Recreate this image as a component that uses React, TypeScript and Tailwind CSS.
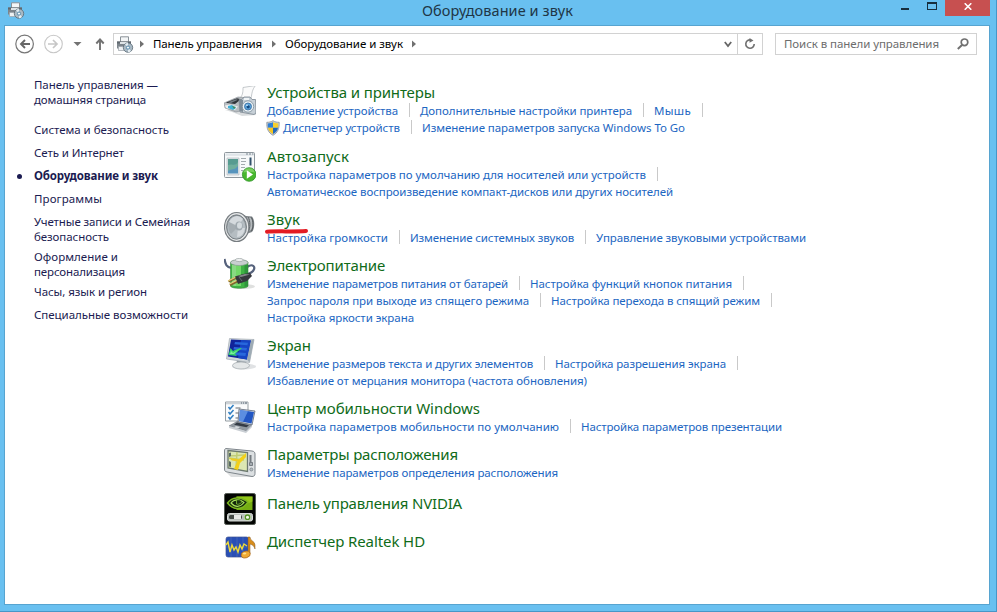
import { useLayoutEffect, useRef, useState } from "react";
import type { ReactNode } from "react";

type FitProps = { text: string; width: number; className?: string };

// Spreads a single line of text over an exact width by adjusting its tracking.
function Fit({ text, width, className = "" }: FitProps) {
  const ref = useRef<HTMLSpanElement>(null);
  const [spacing, setSpacing] = useState(0);
  useLayoutEffect(() => {
    if (ref.current) {
      ref.current.style.letterSpacing = "0px";
      const natural = ref.current.getBoundingClientRect().width;
      const next = (width - natural) / text.length;
      ref.current.style.letterSpacing = `${next}px`;
      setSpacing(next);
    }
  }, [text, width]);
  return (
    <span className={`block shrink-0 whitespace-nowrap ${className}`} style={{ width }}>
      <span ref={ref} style={{ letterSpacing: spacing }}>{text}</span>
    </span>
  );
}

function PrinterSmall() {
  return (
    <svg viewBox="0 0 18 17" className="h-[17px] w-[18px] shrink-0">
      <path d="M4.5 6V.8h8V6" fill="#f4f6f7" stroke="#8a9298" strokeWidth="1" />
      <path d="M1 5.500h14v7H1z" fill="#7c848b" />
      <path d="M1 5.500h14v2H1z" fill="#60686f" />
      <path d="M4 6h8v2H4z" fill="#dfe4e7" />
      <path d="M2.500 10.500h6v4h-6z" fill="#eef1f3" stroke="#9aa1a7" strokeWidth=".7" />
      <circle cx="12" cy="11.600" r="4.700" fill="#a9b9c4" stroke="#596873" strokeWidth=".8" />
      <path d="M12 11.600 9 8.200a4.600 4.600 0 0 1 3-1.200zM12 11.600l3 3.400a4.600 4.600 0 0 1-3 1.200z" fill="#e4edf2" />
      <circle cx="12" cy="11.600" r="1.600" fill="#f4f8fa" stroke="#4b82a6" strokeWidth=".9" />
    </svg>
  );
}

function Shield() {
  return (
    <svg viewBox="0 0 14 16" className="h-4 w-3.5 shrink-0">
      <path d="M7 .7C5 2 3 2.300.8 2.300c-.2 6 1.200 10.400 6.200 13 5-2.600 6.400-7 6.200-13C11 2.300 9 2 7 .7z" fill="#c9ced2" stroke="#8b9298" strokeWidth=".8" />
      <path d="M7 2.200v5.600H2c-.2-1.400-.2-2.800-.2-4.400C3.800 3.300 5.500 3 7 2.200z" fill="#2f7fd6" />
      <path d="M7 2.200c1.500.8 3.200 1.100 5.200 1.200 0 1.600 0 3-.2 4.400H7z" fill="#f8cf2c" />
      <path d="M2 7.800h5v6.300c-3-1.600-4.500-3.600-5-6.300z" fill="#f6c722" />
      <path d="M7 7.800h5c-.5 2.700-2 4.700-5 6.300z" fill="#2269bd" />
    </svg>
  );
}

function Devices() {
  return (
    <>
      <path d="M1 24 8 26l10 4 14-1 0-4z" fill="#d9dcde" />
      <path d="m19 1.500 12.500-2C28 4 28 7 27 13l-11-1c3-3 3-7 3-10.500z" fill="#fbfbfb" stroke="#adb3b8" strokeWidth=".7" />
      <path d="m0 17 14-6 6 .5L16 25l-4 1-11-4z" fill="#b9bec2" stroke="#858c92" strokeWidth=".6" />
      <path d="m2 16.500 11-4.300 4 1-6 4.800-8-1z" fill="#303539" />
      <path d="m4 16.300 8-3 2 .5-7 3.200z" fill="#737d84" />
      <path d="m1 19.500 5-1 8 2-3 3.500-9-2z" fill="#eceff1" />
      <path d="m4 20 4-1 4 3-3 2-5-2z" fill="#3fb2d7" />
      <path d="m8 20 4 1-2 2z" fill="#438e60" />
      <path d="M15 13.500h3l2-2.500h6l2 2.500h3.500L32 27l-2 1.500L16 26z" fill="#c7d0d7" stroke="#7b8790" strokeWidth=".8" />
      <path d="M15 14h4v12l-3-.7z" fill="#7e8c98" />
      <path d="M20 12h5v2h-5z" fill="#eff3f5" />
      <circle cx="24" cy="20.500" r="5.700" fill="#eaf0f4" stroke="#7a8b98" strokeWidth=".8" />
      <circle cx="24" cy="20.500" r="3.500" fill="#5ca4dc" stroke="#32699d" strokeWidth=".8" />
      <circle cx="24.200" cy="20.800" r="1.600" fill="#164b82" />
      <circle cx="23" cy="19.300" r=".8" fill="#e4f6ff" />
    </>
  );
}

function AutoPlay() {
  return (
    <>
      <rect x=".5" y=".5" width="30" height="25" rx="1" fill="#f7f9fa" stroke="#8e979d" />
      <path d="M1.500 1.500h28v2.300h-28z" fill="#dfe4e8" />
      <path d="M22 2h2m1 0h2m1 0h1.500" stroke="#7a8791" />
      <path d="M3 6h12v17H3z" fill="#e4e9ec" stroke="#acb4ba" strokeWidth=".6" />
      <path d="M4 7h10v14.500H4z" fill="#5794bd" />
      <path d="M4 7h10v5c-5 0-7 3-10 6z" fill="#569b90" />
      <path d="M4 13c5-2 7 2 10-3v4c-4 5-6 2-10 5z" fill="#6fae9c" />
      <path d="M17 6.500h5m-5 3h5m-5 3h4m-4 3h4m-4 3h2" stroke="#8c959b" strokeWidth=".8" />
      <path d="M26.500 5.500v8" stroke="#31506b" strokeWidth="2" />
      <circle cx="25.200" cy="22.500" r="6.800" fill="#48b72e" stroke="#2b9323" strokeWidth=".8" />
      <path d="M19.400 20.500a6 6 0 0 1 11.500 0c-3-1-7-1-11.500 0z" fill="#a2e386" opacity=".55" />
      <path d="m22.800 18.200 6.200 4.300-6.200 4.200z" fill="#fff" />
    </>
  );
}

function Speaker() {
  return (
    <>
      <path d="m15 2 7 3 6 .5c3 3 3 12 0 15.500l-6 2-7 6z" fill="#7d8387" />
      <path d="m23 6 4 1c2 3 2 9 0 12l-4 2z" fill="#b4b9bc" />
      <path d="M24 6c2.500 4 2.500 11 0 15M27.500 6.500c2 4 2 10 0 13.500" fill="none" stroke="#555b5f" />
      <ellipse cx="12.700" cy="16" rx="12.200" ry="14.500" fill="#e4e6e7" stroke="#777d81" strokeWidth="1.200" />
      <ellipse cx="12.500" cy="16" rx="10" ry="12.200" fill="#929a9f" stroke="#6c7478" strokeWidth=".8" />
      <ellipse cx="12.500" cy="16.500" rx="9" ry="11" fill="#b5bdc2" />
      <path d="M5 11 14 15l5-7c-4-5-11-4-14 3zM14 17h7c-1 6-4 9-8 9z" fill="#d5dade" />
      <path d="m14 16-9-5c-1 5-1 9 2 12z" fill="#a5adb2" />
      <ellipse cx="15" cy="15" rx="3.700" ry="4.500" fill="#9fa8ae" />
      <ellipse cx="15.500" cy="14.500" rx="2.500" ry="3.300" fill="#d4dade" />
    </>
  );
}

function Power() {
  return (
    <>
      <ellipse cx="19" cy="28.500" rx="12" ry="2.500" fill="#dfe0df" />
      <path d="M.5 1c1 6 2 8 7 9M23 9c6-4 9 0 6 4s-7 1-8 6" fill="none" stroke="#56627c" strokeWidth="2.200" />
      <path d="M6.500 4.500c0-3 17.500-3 17.500 0V28c0 3-17.500 3-17.500 0z" fill="#3fb344" stroke="#35873a" strokeWidth=".6" />
      <path d="M8 7h4v21c-2 0-4-.5-4-1z" fill="#a3e598" opacity=".75" />
      <path d="M12 7h5v21h-5z" fill="#72d867" />
      <path d="M20.500 7H24v21l-3.500 1z" fill="#248337" opacity=".6" />
      <ellipse cx="15.250" cy="4.500" rx="8.700" ry="3" fill="#c8cfcf" stroke="#889292" strokeWidth=".6" />
      <ellipse cx="15.250" cy="2" rx="4" ry="1.600" fill="#eef0f0" stroke="#8c9595" strokeWidth=".6" />
      <path d="m4.500 23.500 8-4m-6.500 7.500 8-4" stroke="#80672d" strokeWidth="2.500" />
      <path d="m4 23 8-4m-6.500 7 8-4" stroke="#e7cc79" strokeWidth="1.300" />
      <path d="m11 18.500 8-2.500 7-1 2 3-5 5-9 3z" fill="#35373c" />
      <path d="m14 18 7-2 5 .5-9 2.500z" fill="#85878b" />
      <path d="m15 19 3 4" stroke="#666970" />
    </>
  );
}

function Display() {
  return (
    <>
      <ellipse cx="20" cy="28.500" rx="12" ry="3" fill="#e0e2e4" />
      <path d="m13 22 9 1 1 5H12z" fill="#8f989d" />
      <ellipse cx="17" cy="27.500" rx="8.500" ry="3.500" fill="#e4e7e8" stroke="#a2a9ad" strokeWidth=".7" />
      <path d="m5.500.5 24.500 1-4.500 23L2.500 21z" fill="#d1d7dc" stroke="#a4acb3" strokeWidth=".7" />
      <path d="m7 1.500 20 1-4 19L4 18.500z" fill="#10249a" />
      <path d="m17 2 10 .5-4 19-9-1.500z" fill="#1544c3" />
      <path d="m11 4 13 .7-.6 2.500-13-.9zM10 9l13 1-.6 2.500-13-1zM9 14l13 1-.6 3-13-1z" fill="#2868dc" />
      <path d="m27 2.500 3-1-4.500 23-2.500-3z" fill="#9eabb4" />
      <path d="m4.500 17 2-7 2.500 3c2-1 6-3 9-3-2 2-5 4-7 6l2 2z" fill="#39cf6d" />
      <path d="m6 16 1-3 2 2 5-3-4 4z" fill="#7af09b" />
    </>
  );
}

function Mobility() {
  return (
    <>
      <path d="M1.500 1h22.500v19H1.500z" fill="#fafbfc" stroke="#969ea4" />
      <path d="M2 1.500h21.500v1.800H2z" fill="#ccd2d7" />
      <path d="M17 2h1m1 0h1m1 0h2" stroke="#586675" />
      <path d="m4.500 6 1.500 2 3.500-4m-5 7 1.500 2 3.500-4m-5 7 1.500 2 3.500-4" fill="none" stroke="#307fc3" strokeWidth="1.500" />
      <path d="M11.500 7h5m-5 5h4m-4 5h3" stroke="#666d72" strokeWidth="1.200" />
      <path d="m15 8 16 2-3 14-14-3z" fill="#d2d9e0" stroke="#5a667a" strokeWidth=".8" />
      <path d="m16 9 14 2-2.500 11.500L15 20z" fill="#2256c3" />
      <path d="m16 9 8 1.200-5 10.600-4-.8z" fill="#6b9ce8" opacity=".8" />
      <path d="m13 20.500 15 3.500-6 6-17-5z" fill="#9098a0" stroke="#69717b" strokeWidth=".6" />
      <path d="m13 21.500 12 2.800-2.500 2-12.500-2.500z" fill="#343b45" />
      <path d="m5 25 17 5 6-6v2l-6 6-17-5z" fill="#c9ced3" />
      <path d="m12 25 4 1-2 1.500-4-1z" fill="#d4d9dd" />
    </>
  );
}

function Location() {
  return (
    <>
      <path d="M3 26h26v4H7z" fill="#dddfe0" />
      <path d="M2 1.500 28 4c2 .2 3 1.400 3 3v19.500c0 2-1 3-3 3L3 25c-2-.5-2.500-1-2.500-3V4c0-1.500.5-2.500 1.500-2.500z" fill="#dce0e2" stroke="#7e858b" />
      <path d="m4 3.500 19.500 2v19L4 21z" fill="#dce7b2" stroke="#6c796f" strokeWidth="1.300" />
      <path d="m5 9 15-1m-8 13 1-16m7 8-15-2" stroke="#bfcd75" strokeWidth="1.500" />
      <path d="m5 6 2-.5V9l-2 1zM5 14l2 1v5l-2-.5z" fill="#596b65" />
      <path d="m10 22 4-9 8-7v4l-6 6-2 7z" fill="#f2d019" />
      <path d="m5 11 9 1 2 3-8-1.500z" fill="#eecb22" />
      <path d="M26.500 8v7" stroke="#747b80" strokeWidth="2" />
      <path d="M25.500 15.500h3v3h-3z" fill="#a6adb2" stroke="#585f65" strokeWidth=".7" />
      <circle cx="27.300" cy="22.500" r="1.500" fill="#b7bec2" stroke="#6a7278" strokeWidth=".6" />
    </>
  );
}

function Nvidia() {
  return (
    <>
      <rect x=".5" y=".5" width="31" height="31" rx="1.800" fill="#030503" stroke="#555b54" />
      <path d="M12.500 3.500H28.500v13.500H12.500z" fill="#75ad12" />
      <path d="M12.500 3.500H28.500v5L12.500 15z" fill="#9ed01c" opacity=".75" />
      <path d="M3.500 10C8 4 16 3 24 9c-6 9-15 8-20.500 1z" fill="#13250b" stroke="#7bb720" strokeWidth="1.500" />
      <path d="M7 10c3-4 9-4 13-.5-4 5-9 5-13 .5z" fill="none" stroke="#a7df5d" strokeWidth="1.200" />
      <path d="M12.500 7c4-1 5 1 5 2.500-2 2-4 2-5 1.500z" fill="#1a340e" stroke="#85c73b" strokeWidth=".8" />
      <rect x="3.500" y="20.500" width="25" height="7.500" rx="2" fill="#bac0bc" stroke="#d9ddda" />
      <rect x="5" y="22" width="13" height="4" rx="1.500" fill="#444a46" />
      <path d="M10 22h7v4h-7z" fill="#e8eae8" />
      <circle cx="23.500" cy="24.200" r="3.300" fill="#d0ecb7" />
      <circle cx="23.500" cy="24.200" r="2.200" fill="#f4fced" stroke="#559029" strokeWidth="1.300" />
    </>
  );
}

function Realtek() {
  return (
    <>
      <rect x="2" y="1" width="22.500" height="20" rx="2" fill="#294fb5" stroke="#3c508f" strokeWidth=".7" />
      <path d="M2 11h22M7 1v20m6-20v20m6-20v20" stroke="#526ebb" strokeWidth=".6" />
      <path d="m2 9 2-3 2 10 2-7 2 5 2-3 2 5 2-7 2 4 2-5 3 2" fill="none" stroke="#efdb38" strokeWidth="1.400" />
      <path d="M24 1h2c0 4 5 4 5 8v4c-1-3-2-4-5-5v10h-2z" fill="#d88d1c" stroke="#875a21" strokeWidth=".5" />
      <ellipse cx="21.700" cy="18.500" rx="4.600" ry="3.300" transform="rotate(-15 21.700 18.500)" fill="#efa932" stroke="#ab671a" strokeWidth=".7" />
      <ellipse cx="20.500" cy="17.500" rx="1.800" ry="1" fill="#ffe087" />
    </>
  );
}

type LinkItem = { text: string; width: number; shield?: boolean; last?: boolean };
type Section = { title: string; width: number; icon: ReactNode; iconClass: string; gap: string; rows: LinkItem[][] };

const sections: Section[] = [
  { title: "Устройства и принтеры", width: 168, icon: <Devices />, iconClass: "mt-[3px]", gap: "mb-2.5", rows: [
    [{ text: "Добавление устройства", width: 131 }, { text: "Дополнительные настройки принтера", width: 212 }, { text: "Мышь", width: 37 }],
    [{ text: "Диспетчер устройств", width: 117, shield: true }, { text: "Изменение параметров запуска Windows To Go", width: 263, last: true }],
  ] },
  { title: "Автозапуск", width: 82, icon: <AutoPlay />, iconClass: "mt-[5px]", gap: "mb-[9px]", rows: [
    [{ text: "Настройка параметров по умолчанию для носителей или устройств", width: 379 }],
    [{ text: "Автоматическое воспроизведение компакт-дисков или других носителей", width: 406, last: true }],
  ] },
  { title: "Звук", width: 33, icon: <Speaker />, iconClass: "mt-px", gap: "mb-[9px]", rows: [
    [{ text: "Настройка громкости", width: 121 }, { text: "Изменение системных звуков", width: 164 }, { text: "Управление звуковыми устройствами", width: 210, last: true }],
  ] },
  { title: "Электропитание", width: 118, icon: <Power />, iconClass: "mt-0.5", gap: "mb-[9px]", rows: [
    [{ text: "Изменение параметров питания от батарей", width: 241 }, { text: "Настройка функций кнопок питания", width: 202 }],
    [{ text: "Запрос пароля при выходе из спящего режима", width: 262 }, { text: "Настройка перехода в спящий режим", width: 209 }],
    [{ text: "Настройка яркости экрана", width: 147, last: true }],
  ] },
  { title: "Экран", width: 44, icon: <Display />, iconClass: "mt-0.5", gap: "mb-[9px]", rows: [
    [{ text: "Изменение размеров текста и других элементов", width: 266 }, { text: "Настройка разрешения экрана", width: 171 }],
    [{ text: "Избавление от мерцания монитора (частота обновления)", width: 320, last: true }],
  ] },
  { title: "Центр мобильности Windows", width: 213, icon: <Mobility />, iconClass: "mt-0.5", gap: "mb-[9px]", rows: [
    [{ text: "Настройка параметров мобильности по умолчанию", width: 292 }, { text: "Настройка параметров презентации", width: 201, last: true }],
  ] },
  { title: "Параметры расположения", width: 191, icon: <Location />, iconClass: "mt-0.5", gap: "mb-3", rows: [
    [{ text: "Изменение параметров определения расположения", width: 291, last: true }],
  ] },
  { title: "Панель управления NVIDIA", width: 195, icon: <Nvidia />, iconClass: "-mt-px", gap: "mb-[18px]", rows: [] },
  { title: "Диспетчер Realtek HD", width: 158, icon: <Realtek />, iconClass: "mt-1", gap: "", rows: [] },
];

const nav = [
  { lines: [["Панель управления —", 124], ["домашняя страница", 112]], gap: "mb-[15px]" },
  { lines: [["Система и безопасность", 135]], gap: "mb-2" },
  { lines: [["Сеть и Интернет", 90]], gap: "mb-2" },
  { lines: [["Оборудование и звук", 124]], gap: "mb-2", active: true },
  { lines: [["Программы", 68]], gap: "mb-2" },
  { lines: [["Учетные записи и Семейная", 156], ["безопасность", 75]], gap: "mb-[5px]" },
  { lines: [["Оформление и", 84], ["персонализация", 91]], gap: "mb-[5px]" },
  { lines: [["Часы, язык и регион", 113]], gap: "mb-2" },
  { lines: [["Специальные возможности", 154]], gap: "" },
] as { lines: [string, number][]; gap: string; active?: boolean }[];

function Crumb() {
  return <svg viewBox="0 0 4 8" className="h-2 w-1 shrink-0"><path d="m0 .5 4 3.500-4 3.500z" fill="#707070" /></svg>;
}

function TitleBar() {
  return (
    <header className="flex h-[25px] shrink-0">
      <div className="w-[422px] pt-0.5 pl-[7px]"><PrinterSmall /></div>
      <Fit text="Оборудование и звук" width={151} className="text-[14.5px] leading-[21px] text-[#203646]" />
      <div className="flex flex-1 justify-end pr-[6px]">
        <div className="mt-2 mr-[18px] h-[2px] w-2 bg-[#172f3e]" />
        <div className="mt-0.5 mr-2 h-2 w-2.5 border border-t-2 border-[#172f3e]" />
        <div className="flex h-4 w-[45px] justify-center bg-[#c75050] pt-[3px]">
          <svg viewBox="0 0 8 7" className="h-[7px] w-2"><path d="m.7.3 6.600 6.400m0-6.400L.7 6.700" stroke="#fff" strokeWidth="1.600" /></svg>
        </div>
      </div>
    </header>
  );
}

function NavBar() {
  return (
    <div className="flex h-[35px] shrink-0 items-start pt-[7px] pl-2.5">
      <svg viewBox="0 0 92 22" className="h-[22px] w-[92px] shrink-0" fill="none">
        <circle cx="9.600" cy="11" r="8.800" stroke="#777" strokeWidth="1.200" />
        <path d="M15 11H6m4-4-4 4 4 4" stroke="#676767" strokeWidth="1.900" />
        <circle cx="38.500" cy="11" r="8.800" stroke="#c7c7c7" strokeWidth="1.100" />
        <path d="M33 11h9m-4-4 4 4-4 4" stroke="#c6c6c6" strokeWidth="1.700" />
        <path d="M58.500 9h8l-4 4z" fill="#737373" />
        <path d="M85 17V6.500m-3.700 4L85 6.500l3.700 4" stroke="#727272" strokeWidth="1.900" />
      </svg>
      <div className="ml-[6px] flex h-[22px] w-[650px] items-center border border-[#d2d2d2] text-[11.5px] text-black">
        <div className="ml-0.5"><PrinterSmall /></div>
        <div className="ml-[6px] flex items-center"><Crumb /><Fit text="Панель управления" width={109} className="ml-[9px]" /></div>
        <div className="ml-[10px] flex items-center"><Crumb /><Fit text="Оборудование и звук" width={118} className="ml-[9px]" /></div>
        <div className="ml-[9px] flex"><Crumb /></div>
        <svg viewBox="0 0 8 7" className="mr-[5px] ml-auto h-[7px] w-2" fill="none"><path d="m.8 1 3.200 4 3.200-4" stroke="#666" strokeWidth="1.800" /></svg>
        <div className="flex h-full w-[25px] items-center justify-center border-l border-[#d2d2d2]">
          <svg viewBox="0 0 12 12" className="size-3" fill="none"><path d="M10.200 6a4.200 4.200 0 1 1-3.500-4.100" stroke="#707070" strokeWidth="1.600" /><path d="M5.500 0v4.800l4-2.400z" fill="#707070" /></svg>
        </div>
      </div>
      <div className="ml-3 flex h-[22px] w-[202px] items-center border border-[#d2d2d2] pl-2 text-[#6d6d6d]">
        <Fit text="Поиск в панели управления" width={155} className="text-[11.5px]" />
        <svg viewBox="0 0 12 12" className="ml-[18px] size-3" fill="none"><circle cx="7.500" cy="4.300" r="3.300" stroke="#707070" strokeWidth="1.700" /><path d="M5 7 .8 11" stroke="#707070" strokeWidth="2" /></svg>
      </div>
    </div>
  );
}

function Sidebar() {
  return (
    <nav className="w-[218px] shrink-0 pt-4 text-[11.5px] leading-[15px] text-[#1b1b51]">
      {nav.map((item) => (
        <div key={item.lines[0][0]} className={`flex ${item.gap} ${item.active ? "font-bold" : ""}`}>
          <div className="w-[29px] pt-[6px] pl-3">{item.active && <div className="size-[5px] rounded-full bg-[#1b1b51]" />}</div>
          <div>{item.lines.map(([text, width]) => <Fit key={text} text={text} width={width} />)}</div>
        </div>
      ))}
    </nav>
  );
}

function CategoryBlock({ section }: { section: Section }) {
  return (
    <section className={`flex ${section.gap}`}>
      <div className="h-5 w-11 shrink-0 pl-px">
        <svg viewBox="0 0 32 32" className={`size-8 ${section.iconClass}`}>{section.icon}</svg>
      </div>
      <div>
        <div className="relative h-5">
          <Fit text={section.title} width={section.width} className="text-[15px] leading-[19px] text-[#0f6b19]" />
          {section.title === "Звук" && (
            <svg viewBox="0 0 44 5" className="absolute top-[19px] -left-0.5 z-10 h-[5px] w-11"><path d="M2 2.700c12-.8 27 .2 39-.7" fill="none" stroke="#e31b23" strokeWidth="4" strokeLinecap="round" /></svg>
          )}
        </div>
        {section.rows.map((row) => (
          <div key={row[0].text} className="flex h-[17px]">
            {row.map((link) => (
              <div key={link.text} className="flex">
                {link.shield && <div className="-ml-px mr-0.5 w-[15px]"><Shield /></div>}
                <Fit text={link.text} width={link.width} className="text-[11.5px] leading-[15px] text-[#1c66c2]" />
                {!link.last && <div className="mr-2.5 ml-[11px] h-3.5 w-px shrink-0 bg-[#c9c9c9]" />}
              </div>
            ))}
          </div>
        ))}
      </div>
    </section>
  );
}

export default function App() {
  return (
    <div className="flex h-[612px] w-[997px] flex-col overflow-hidden border-r border-b border-[#4796c7] bg-[#69c0f0] font-['Noto_Sans',sans-serif]">
      <TitleBar />
      <div className="mr-[6px] mb-[6px] ml-1 flex min-h-0 flex-1 flex-col border border-[#57a4d0] bg-white">
        <NavBar />
        <main className="flex flex-1">
          <Sidebar />
          <div className="pt-[22px]">
            {sections.map((section) => <CategoryBlock key={section.title} section={section} />)}
          </div>
        </main>
      </div>
    </div>
  );
}
